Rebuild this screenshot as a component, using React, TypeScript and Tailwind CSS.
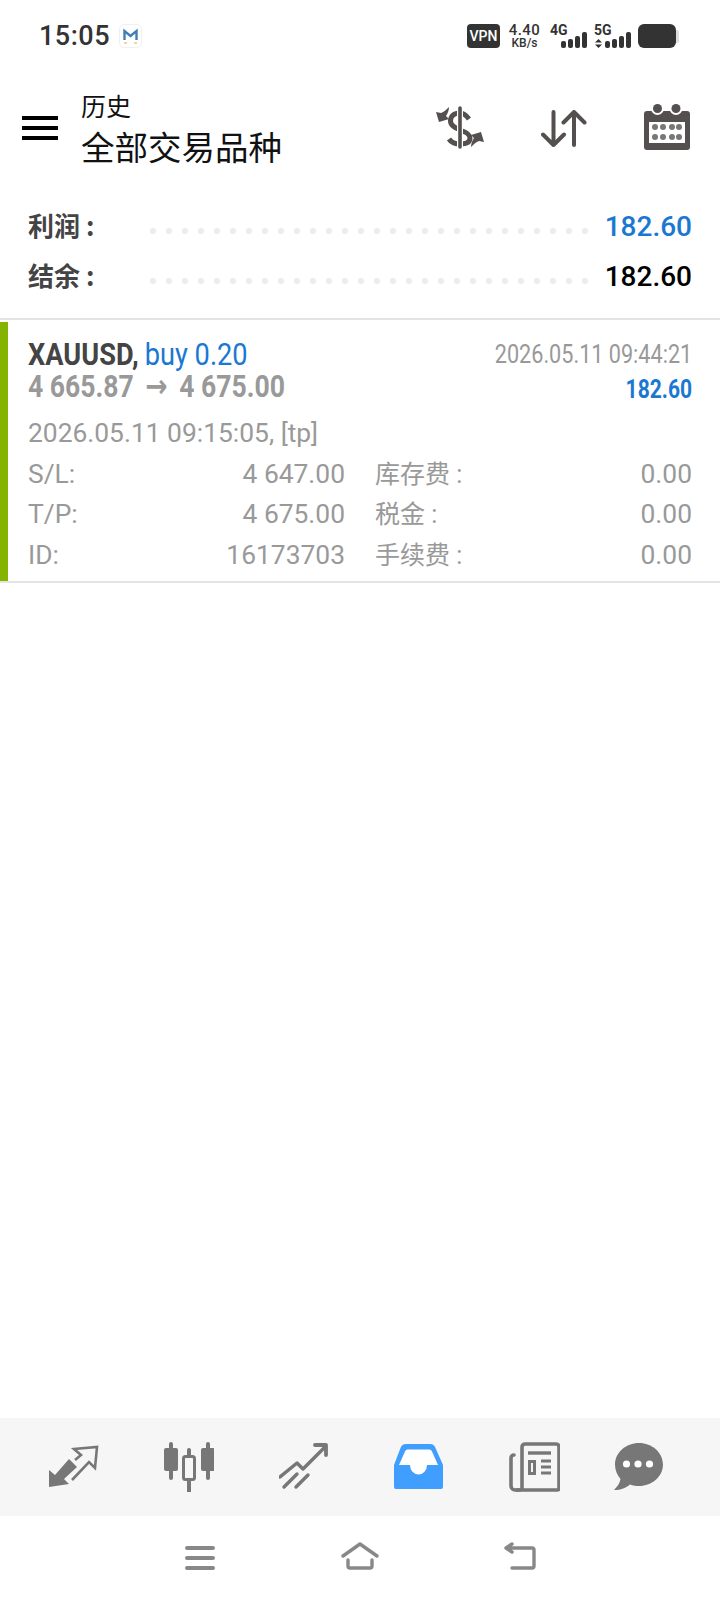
const cjk = "font-['Roboto','Noto_Sans_CJK_SC',sans-serif]";

function Dots() {
  return (
    <div className="flex w-[448px] shrink-0 gap-[10px] pt-[10px]">
      {Array.from({ length: 28 }).map((_, i) => (
        <span key={i} className="h-[6px] w-[6px] rounded-full bg-[#ececec]" />
      ))}
    </div>
  );
}

function Bars() {
  return (
    <div className="flex items-end gap-[2px]">
      {[7, 9, 12, 16].map((h, i) => (
        <span key={i} className="w-[5px] rounded-[2px] bg-[#333]" style={{ height: h }} />
      ))}
    </div>
  );
}

function StatusBar() {
  return (
    <div className="flex h-[72px] items-center pl-[39px] pr-[41px]">
      <span className="font-['Roboto',sans-serif] text-[27px] font-medium tracking-[0.5px] text-[#333]">15:05</span>
      <div className="ml-[9px] flex h-[24px] w-[23px] items-center justify-center rounded-[5px] border border-[#f0f0f0]">
        <svg width="17" height="17" viewBox="0 0 17 17">
          <path d="M2.5 12V3l6 5 6-5v9" fill="none" stroke="#3f7fb5" strokeWidth="2.4" />
          <path d="M2 15h3M12 15h3" stroke="#f1c77a" strokeWidth="1.5" />
        </svg>
      </div>
      <div className="ml-auto flex items-center">
        <div className="flex h-[24px] w-[33px] items-center justify-center rounded-[4px] bg-[#333] font-['Roboto',sans-serif] text-[14px] font-medium text-white">VPN</div>
        <div className="ml-[8px] flex w-[33px] flex-col items-center font-['Roboto',sans-serif] font-medium text-[#333]">
          <span className="text-[15px] leading-[14px] tracking-[0.5px]">4.40</span>
          <span className="text-[12px] leading-[12px]">KB/s</span>
        </div>
        <div className="relative ml-[9px] h-[24px] w-[37px]">
          <span className="absolute left-0 top-0 font-['Roboto',sans-serif] text-[14px] font-bold leading-[13px] text-[#333]">4G</span>
          <div className="absolute bottom-0 right-0">
            <Bars />
          </div>
        </div>
        <div className="relative ml-[7px] h-[24px] w-[37px]">
          <span className="absolute left-0 top-0 font-['Roboto',sans-serif] text-[14px] font-bold leading-[13px] text-[#333]">5G</span>
          <svg className="absolute bottom-0 left-[1px]" width="7" height="9" viewBox="0 0 7 9">
            <path d="M3.5 0L7 3.6H0zM3.5 9L0 5.4h7z" fill="#333" />
          </svg>
          <div className="absolute bottom-0 right-0">
            <Bars />
          </div>
        </div>
        <div className="ml-[7px] flex items-center">
          <div className="h-[24px] w-[38px] rounded-[6px] bg-[#333]" />
          <div className="h-[13px] w-[3px] rounded-r-[2px] bg-[#ddd]" />
        </div>
      </div>
    </div>
  );
}

function DollarIcon() {
  return (
    <svg width="50" height="44" viewBox="0 0 50 44" fill="none">
      <path
        d="M33 14C30 10 27 8 24 8C18 8 14.500 11 14.500 16C14.500 21 20 23 24 25C30 27 34 29 34 33C34 37 30 39 24 39C19 39 15 37 13 34"
        stroke="#555050"
        strokeWidth="5"
      />
      <path d="M24 0v44" stroke="#fff" strokeWidth="6" />
      <path d="M24 3v39" stroke="#555050" strokeWidth="3.600" strokeLinecap="round" />
      <path d="M3 17L13 14L10 11C12 8 13 5 13 2C10 5 8 7 5 8L0 7Z" fill="#555050" />
      <path d="M45 27L35 30L38 33C36 36 35 39 35 42C38 39 40 37 43 36L48 37Z" fill="#555050" />
    </svg>
  );
}

function SortIcon() {
  return (
    <svg width="46" height="37" viewBox="0 0 46 37" fill="none" stroke="#555050" strokeWidth="4" strokeLinecap="round" strokeLinejoin="round">
      <path d="M12.500 2v33M2 24.500l10.500 10.500 10.500-10.500" />
      <path d="M33 35V2M22.500 12.500L33 2l10.500 10.500" />
    </svg>
  );
}

function CalendarIcon() {
  return (
    <svg width="46" height="46" viewBox="0 0 46 46">
      <path d="M3 7h40a3 3 0 0 1 3 3v33a3 3 0 0 1-3 3H3a3 3 0 0 1-3-3V10a3 3 0 0 1 3-3z" fill="#555050" />
      <rect x="5" y="18" width="36" height="21" fill="#fff" />
      <circle cx="13.500" cy="4.500" r="6.500" fill="#fff" />
      <circle cx="32" cy="4.500" r="6.500" fill="#fff" />
      <circle cx="13.500" cy="4.500" r="4.500" fill="#555050" />
      <circle cx="32" cy="4.500" r="4.500" fill="#555050" />
      {[11, 19, 28, 35].map((x) => (
        <g key={x} fill="#777">
          <circle cx={x} cy="23" r="3" />
          <circle cx={x} cy="33" r="3" />
        </g>
      ))}
    </svg>
  );
}

function Header() {
  return (
    <div className="flex h-[126px] items-start">
      <div className="ml-[22px] mt-[44px] flex w-[36px] flex-col gap-[6px]">
        <span className="h-[4px] bg-black" />
        <span className="h-[4px] bg-black" />
        <span className="h-[4px] bg-black" />
      </div>
      <div className="ml-[23px] mt-[18px] font-['Noto_Sans_CJK_SC',sans-serif]">
        <div className="text-[25px] leading-[30px] text-[#111]">历史</div>
        <div className="mt-[5px] text-[33.5px] leading-[42px] text-[#111]">全部交易品种</div>
      </div>
      <div className="ml-auto mr-[30px] mt-[33px] flex items-start">
        <DollarIcon />
        <div className="ml-[55px] mt-[5px]">
          <SortIcon />
        </div>
        <div className="ml-[57px] -mt-[1px]">
          <CalendarIcon />
        </div>
      </div>
    </div>
  );
}

function SummaryRow({ label, value, tone }: { label: string; value: string; tone: string }) {
  return (
    <div className="flex h-[50px] items-center pl-[28px] pr-[28px]">
      <span className="w-[122px] shrink-0 pb-[4px] font-['Noto_Sans_CJK_SC',sans-serif] text-[26px] font-bold text-[#444]">{label}</span>
      <Dots />
      <span className={`ml-auto pt-[1px] font-['Roboto',sans-serif] text-[28px] font-medium ${tone}`}>{value}</span>
    </div>
  );
}

function DetailRow({ a, b, c, d }: { a: string; b: string; c: string; d: string }) {
  return (
    <div className={`flex h-[40px] items-center text-[26.4px] text-[#999] ${cjk}`}>
      <div className="flex w-[317px] shrink-0 justify-between">
        <span>{a}</span>
        <span>{b}</span>
      </div>
      <span className="ml-[30px] text-[25px]">{c}</span>
      <span className="ml-auto">{d}</span>
    </div>
  );
}

function DealCard() {
  return (
    <div className="flex h-[261px] border-b-2 border-[#e4e4e4]">
      <div className="w-[8px] bg-[#84b400]" />
      <div className="min-w-0 flex-1 pl-[20px] pr-[28px] font-['Roboto',sans-serif]">
        <div className="mt-[16px] flex h-[32px] items-center justify-between">
          <div className="flex origin-left scale-x-[0.85] gap-[7px] whitespace-nowrap text-[32px] leading-[32px]">
            <span className="font-bold text-[#444]">XAUUSD,</span>
            <span className="text-[#1a78d2]">buy 0.20</span>
          </div>
          <span className="origin-right scale-x-[0.865] whitespace-nowrap pt-[1px] text-[25px] leading-[28px] text-[#999]">2026.05.11 09:44:21</span>
        </div>
        <div className="flex h-[33px] items-center justify-between">
          <div className="flex origin-left scale-x-[0.83] gap-[14px] whitespace-nowrap text-[32px] font-bold leading-[33px] text-[#999]">
            <span>4 665.87</span>
            <span className="font-['DejaVu_Sans',sans-serif]">→</span>
            <span>4 675.00</span>
          </div>
          <span className="origin-right scale-x-[0.81] pt-[5px] text-[26px] font-bold leading-[28px] text-[#1a78d2]">182.60</span>
        </div>
        <div className="mt-[10px] h-[40px] text-[26.4px] leading-[40px] text-[#999]">2026.05.11 09:15:05, [tp]</div>
        <div className="mt-[2px]">
          <DetailRow a="S/L:" b="4 647.00" c="库存费 :" d="0.00" />
          <DetailRow a="T/P:" b="4 675.00" c="税金 :" d="0.00" />
          <div className="pt-[1px]">
            <DetailRow a="ID:" b="16173703" c="手续费 :" d="0.00" />
          </div>
        </div>
      </div>
    </div>
  );
}

const navStroke = "#777";

function TabBar() {
  return (
    <div className="flex h-[98px] items-center gap-[65px] bg-[#f6f6f6] pl-[49px]">
      <svg className="shrink-0" width="50" height="50" viewBox="0 0 50 50" fill="none">
        <g transform="translate(0 3)">
          <path d="M0 42V25L6 30L20 14L28 22L15 34L20 39Z" fill={navStroke} />
          <path d="M26 15L32 10L25 4L48 2L46 23L40 17L23 35" stroke={navStroke} strokeWidth="2.600" />
        </g>
      </svg>
      <svg className="shrink-0" width="50" height="50" viewBox="0 0 50 50" fill="none">
        <path d="M7 2v34M44 2v34M25 8v41" stroke={navStroke} strokeWidth="4" strokeLinecap="round" />
        <rect x="0" y="6" width="14" height="23" rx="2" fill={navStroke} />
        <rect x="37" y="6" width="14" height="23" rx="2" fill={navStroke} />
        <rect x="19.500" y="14.500" width="11" height="23" rx="2" fill="#f6f6f6" stroke={navStroke} strokeWidth="3" />
      </svg>
      <svg className="shrink-0" width="50" height="50" viewBox="0 0 50 50" fill="none" stroke={navStroke} strokeWidth="3.400" strokeLinecap="round" strokeLinejoin="round">
        <path d="M1 35L18 21L24 27L46 5" />
        <path d="M36 3H47V13" strokeWidth="3.800" />
        <path d="M5 45L18 32M17 45L29 33" />
      </svg>
      <svg className="shrink-0" width="50" height="50" viewBox="0 0 50 50">
        <path d="M12 2h24a6 6 0 0 1 5.500 4L49 23v22a2 2 0 0 1-2 2H2a2 2 0 0 1-2-2V23L6.500 6A6 6 0 0 1 12 2z" fill="#409eff" />
        <path d="M14 7.500h21a3 3 0 0 1 3 2L44 23H33a8.500 9.500 0 0 1-17 0H5L11 9.500a3 3 0 0 1 3-2z" fill="#fff" />
      </svg>
      <svg className="shrink-0" width="51" height="50" viewBox="0 0 51 50" fill="none" stroke={navStroke}>
        <path d="M11 48H6a4 4 0 0 1-4-4V16a3 3 0 0 1 3-3" strokeWidth="3.600" strokeLinecap="round" />
        <path d="M13 48V5a3 3 0 0 1 3-3h31a3 3 0 0 1 3 3v41a2 2 0 0 1-2 2H7" strokeWidth="3.600" />
        <path d="M19 11h23" strokeWidth="3.400" />
        <rect x="20.500" y="19.500" width="5" height="12" strokeWidth="3" />
        <path d="M32 19h10M32 25h10M32 31h10" strokeWidth="3" />
      </svg>
      <svg className="-ml-[11px] shrink-0" width="50" height="50" viewBox="0 0 50 50">
        <path d="M25 1c13 0 24 9.500 24 21.500S38 44 25 44c-3 0-6-.4-9-1.500C12 46 7 48 0 48c3-3 6-7 6.500-11C3 33 1 28 1 22.500 1 10.500 12 1 25 1z" fill={navStroke} />
        <circle cx="12.500" cy="22" r="3.600" fill="#fff" />
        <circle cx="24" cy="22" r="3.600" fill="#fff" />
        <circle cx="35.500" cy="22" r="3.600" fill="#fff" />
      </svg>
    </div>
  );
}

function SystemNav() {
  return (
    <div className="flex h-[84px] items-start pt-[26px]">
      <svg className="ml-[185px] shrink-0" width="30" height="30" viewBox="0 0 30 30" fill="none" stroke="#888" strokeWidth="4" strokeLinecap="round">
        <path d="M2 6h26M2 16h26M2 26h26" />
      </svg>
      <svg className="ml-[126px] shrink-0" width="38" height="30" viewBox="0 0 38 30" fill="none" stroke="#888" strokeWidth="3.400" strokeLinecap="round" strokeLinejoin="round">
        <path d="M2 14L19 2l17 12" />
        <path d="M7 18v6a2 2 0 0 0 2 2h20a2 2 0 0 0 2-2v-6" />
      </svg>
      <svg className="ml-[125px] shrink-0" width="34" height="30" viewBox="0 0 34 30" fill="none" stroke="#888" strokeWidth="3.400" strokeLinecap="round" strokeLinejoin="round">
        <path d="M4 6h24a2 2 0 0 1 2 2v16a2 2 0 0 1-2 2H8" />
        <path d="M8 2L2 6l6 4" fill="#888" />
      </svg>
    </div>
  );
}

export default function App() {
  return (
    <div className="flex h-[1600px] w-[720px] flex-col bg-white">
      <StatusBar />
      <Header />
      <div className="h-[122px] border-b-2 border-[#e4e4e4] pt-[3px]">
        <SummaryRow label="利润 :" value="182.60" tone="text-[#1a78d2]" />
        <SummaryRow label="结余 :" value="182.60" tone="text-black" />
      </div>
      <div className="h-[2px]" />
      <DealCard />
      <div className="flex-1" />
      <TabBar />
      <SystemNav />
    </div>
  );
}
